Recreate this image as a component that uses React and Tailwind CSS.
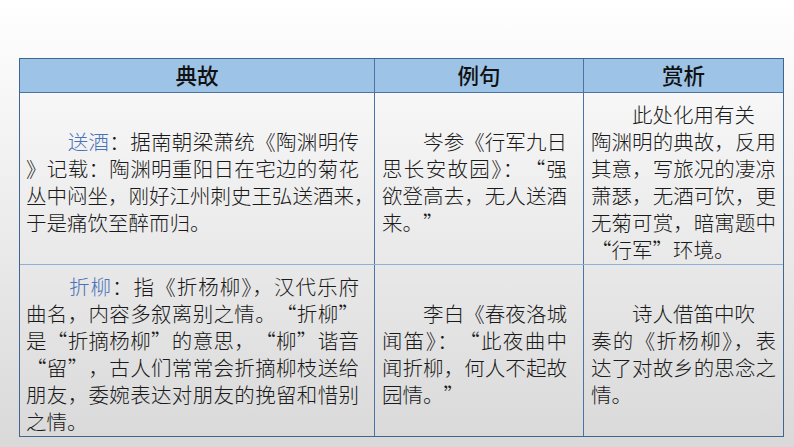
import React from "react";

const serif = { fontFamily: '"Noto Sans CJK SC", "Noto Sans", sans-serif' };

function q(str) {
  const parts = [];
  let buf = "";
  [...str].forEach((ch, i) => {
    if (ch === "“" || ch === "”") {
      if (buf) parts.push(buf);
      buf = "";
      parts.push(
        <span
          key={i}
          className={`inline-block w-[1em] ${ch === "“" ? "text-right" : "text-left"}`}
        >
          {ch}
        </span>
      );
    } else buf += ch;
  });
  if (buf) parts.push(buf);
  return parts;
}

function Lines({ lines, w }) {
  return (
    <div className={`${w} font-light`} style={serif}>
      {lines.map((l, i) => (
        <div
          key={i}
          className={`whitespace-nowrap text-[20.5px] leading-[27px] text-[#1a1a1a] ${
            l.full ? "text-justify [text-align-last:justify]" : "text-left"
          }`}
        >
          {typeof l.t === "string" ? q(l.t) : l.t}
        </div>
      ))}
    </div>
  );
}

const B = ({ children }) => <span className="text-[#4a72b8]">{children}</span>;

export default function App() {
  const ind = "\u3000\u3000";
  return (
    <div className="w-[794px] h-[447px] overflow-hidden bg-gradient-to-b from-white to-[#d9d9d9] pt-[58px] pl-[19px]">
      <div className="w-[765px] border border-[#3f6590]">
        {/* header */}
        <div
          className="flex h-[34px] bg-[#9dc3e6] border-b border-[#4d73a0] text-[21.5px] font-medium text-[#111]"
          style={{ fontFamily: '"Noto Sans CJK SC", sans-serif' }}
        >
          <div className="w-[355px] border-r border-[#4d73a0] flex items-center justify-center">典故</div>
          <div className="w-[209px] border-r border-[#4d73a0] flex items-center justify-center">例句</div>
          <div className="w-[199px] flex items-center justify-center">赏析</div>
        </div>
        {/* row 1 */}
        <div className="flex h-[172px] border-b border-[#8fb0d6]">
          <div className="w-[355px] border-r border-[#4d73a0] flex items-center pl-[6px] pt-[6px]">
            <Lines
              w="w-[333px]"
              lines={[
                { t: <>{ind}<B>送酒</B>：据南朝梁萧统《陶渊明传</>, full: true },
                { t: "》记载：陶渊明重阳日在宅边的菊花", full: true },
                { t: "丛中闷坐，刚好江州刺史王弘送酒来，" },
                { t: "于是痛饮至醉而归。" },
              ]}
            />
          </div>
          <div className="w-[209px] border-r border-[#4d73a0] flex items-center pl-[7px] pt-[6px]">
            <Lines
              w="w-[185px]"
              lines={[
                { t: ind + "岑参《行军九日", full: true },
                { t: "思长安故园》：“强", full: true },
                { t: "欲登高去，无人送酒", full: true },
                { t: "来。”" },
              ]}
            />
          </div>
          <div className="w-[199px] flex items-center pl-[7px] pt-[6px]">
            <Lines
              w="w-[185px]"
              lines={[
                { t: ind + "此处化用有关" },
                { t: "陶渊明的典故，反用", full: true },
                { t: "其意，写旅况的凄凉", full: true },
                { t: "萧瑟，无酒可饮，更", full: true },
                { t: "无菊可赏，暗寓题中", full: true },
                { t: "“行军”环境。" },
              ]}
            />
          </div>
        </div>
        {/* row 2 */}
        <div className="flex h-[171px]">
          <div className="w-[355px] border-r border-[#4d73a0] flex items-center pl-[6px] pt-[7px]">
            <Lines
              w="w-[333px]"
              lines={[
                { t: <>{ind}<B>折柳</B>：指《折杨柳》，汉代乐府</>, full: true },
                { t: "曲名，内容多叙离别之情。“折柳”", full: true },
                { t: "是“折摘杨柳”的意思，“柳”谐音", full: true },
                { t: "“留”，古人们常常会折摘柳枝送给", full: true },
                { t: "朋友，委婉表达对朋友的挽留和惜别", full: true },
                { t: "之情。" },
              ]}
            />
          </div>
          <div className="w-[209px] border-r border-[#4d73a0] flex items-center pl-[7px] pt-[7px]">
            <Lines
              w="w-[185px]"
              lines={[
                { t: ind + "李白《春夜洛城", full: true },
                { t: "闻笛》：“此夜曲中", full: true },
                { t: "闻折柳，何人不起故", full: true },
                { t: "园情。”" },
              ]}
            />
          </div>
          <div className="w-[199px] flex items-center pl-[7px] pt-[7px]">
            <Lines
              w="w-[185px]"
              lines={[
                { t: ind + "诗人借笛中吹" },
                { t: "奏的《折杨柳》，表", full: true },
                { t: "达了对故乡的思念之", full: true },
                { t: "情。" },
              ]}
            />
          </div>
        </div>
      </div>
    </div>
  );
}
